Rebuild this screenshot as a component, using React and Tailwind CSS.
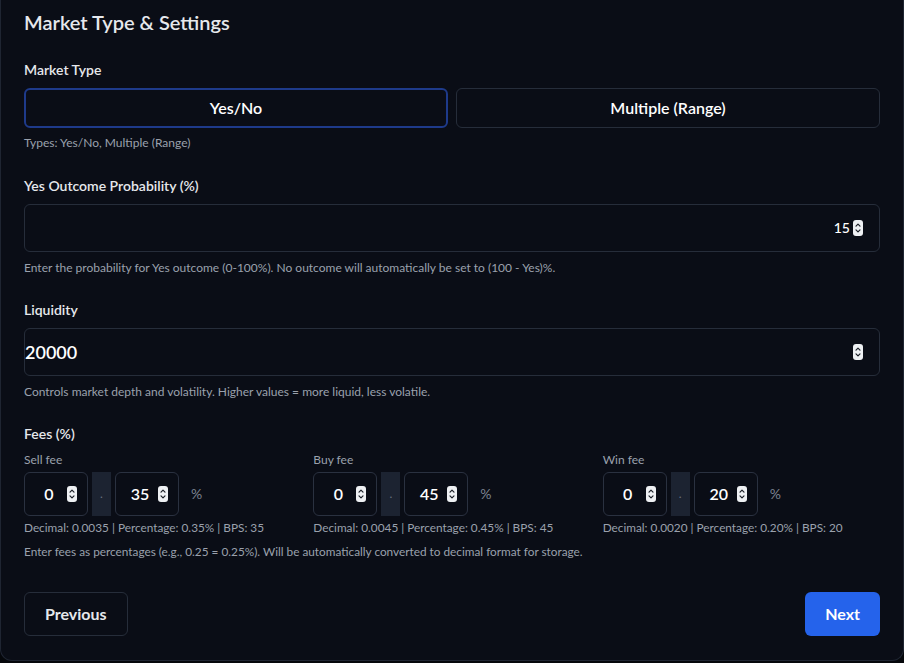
import React from 'react';

const Spinner = () => (
  <svg width="10" height="16" viewBox="0 0 10 16" className="shrink-0">
    <rect x="0" y="0" width="10" height="16" rx="3" fill="#eef0f3" />
    <path d="M3 6.2 L5 4.2 L7 6.2" fill="none" stroke="#1b1f27" strokeWidth="1.2" strokeLinecap="round" strokeLinejoin="round" />
    <path d="M3 9.8 L5 11.8 L7 9.8" fill="none" stroke="#1b1f27" strokeWidth="1.2" strokeLinecap="round" strokeLinejoin="round" />
  </svg>
);

const fees = [
  { label: 'Sell fee', dec: '35', info: 'Decimal: 0.0035 | Percentage: 0.35% | BPS: 35' },
  { label: 'Buy fee', dec: '45', info: 'Decimal: 0.0045 | Percentage: 0.45% | BPS: 45' },
  { label: 'Win fee', dec: '20', info: 'Decimal: 0.0020 | Percentage: 0.20% | BPS: 20' },
];

const FeeBox = ({ value }) => (
  <div className="w-16 h-11 rounded-md border border-[#2a3140] flex items-center pl-[6px] pr-[10px]">
    <span className="flex-1 text-center text-base font-semibold text-white">{value}</span>
    <Spinner />
  </div>
);

export default function App() {
  return (
    <div className="w-[904px] h-[663px] bg-[#05070b] font-['Lato',sans-serif] overflow-hidden">
      <div className="w-[904px] h-[661px] bg-[#0a0d16] border-x border-b border-[#1f2532] rounded-b-xl px-[23px] pt-2 flex flex-col">
        <h2 className="text-xl leading-7 font-semibold text-[#e6e8ec]">Market Type &amp; Settings</h2>

        <div className="mt-6 text-sm leading-5 font-semibold text-[#e6e8ec]">Market Type</div>
        <div className="mt-2 grid grid-cols-2 gap-2">
          <button className="h-10 rounded-md border-2 border-[#1e3a8a] text-base font-semibold text-white">Yes/No</button>
          <button className="h-10 rounded-md border border-[#262d3a] text-base font-semibold text-white">Multiple (Range)</button>
        </div>
        <p className="mt-[7px] text-xs leading-4 text-[#9aa1ad]">Types: Yes/No, Multiple (Range)</p>

        <div className="mt-[25px] text-sm leading-5 font-semibold text-[#e6e8ec]">Yes Outcome Probability (%)</div>
        <div className="mt-2 h-12 rounded-md border border-[#262d3a] flex items-center justify-end gap-[3px] pr-4">
          <span className="text-sm font-medium text-white">15</span>
          <Spinner />
        </div>
        <p className="mt-2 text-xs leading-4 text-[#9aa1ad]">Enter the probability for Yes outcome (0-100%). No outcome will automatically be set to (100 - Yes)%.</p>

        <div className="mt-6 text-sm leading-5 font-semibold text-[#e6e8ec]">Liquidity</div>
        <div className="mt-2 h-12 rounded-md border border-[#262d3a] flex items-center pr-4">
          <span className="flex-1 text-lg font-semibold text-white">20000</span>
          <Spinner />
        </div>
        <p className="mt-2 text-xs leading-4 text-[#9aa1ad]">Controls market depth and volatility. Higher values = more liquid, less volatile.</p>

        <div className="mt-6 text-sm leading-5 font-semibold text-[#e6e8ec]">Fees (%)</div>
        <div className="mt-2 grid grid-cols-3 gap-3">
          {fees.map(f => (
            <div key={f.label}>
              <div className="text-xs leading-4 text-[#9aa1ad]">{f.label}</div>
              <div className="mt-1 flex items-center">
                <FeeBox value="0" />
                <div className="ml-1 w-[19px] h-11 bg-[#1c2331] flex items-center justify-center text-[#6b7280] text-xs">.</div>
                <div className="ml-1"><FeeBox value={f.dec} /></div>
                <span className="ml-3 text-sm text-[#7b8290]">%</span>
              </div>
              <p className="mt-1 text-[11.8px] leading-4 text-[#9aa1ad]">{f.info}</p>
            </div>
          ))}
        </div>
        <p className="mt-2 text-[11.8px] leading-4 text-[#9aa1ad]">Enter fees as percentages (e.g., 0.25 = 0.25%). Will be automatically converted to decimal format for storage.</p>

        <div className="mt-8 flex justify-between">
          <button className="h-11 px-5 rounded-md border border-[#262d3a] text-base font-bold text-[#e6e8ec]">Previous</button>
          <button className="h-11 px-5 rounded-md bg-[#2563eb] text-base font-bold text-white">Next</button>
        </div>
      </div>
    </div>
  );
}
